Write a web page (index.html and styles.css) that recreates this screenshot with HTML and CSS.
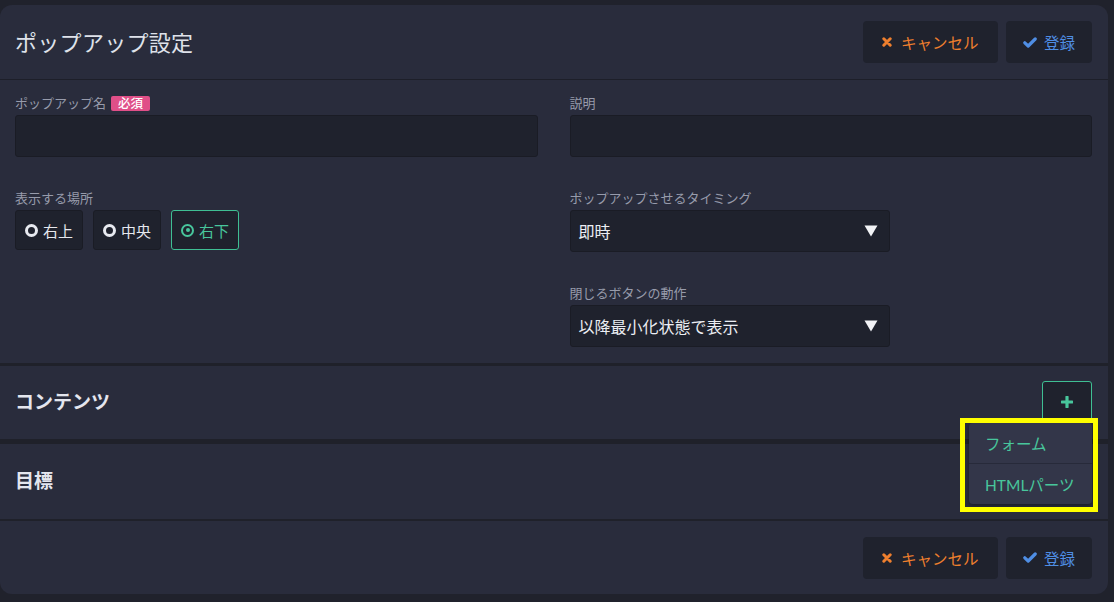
FILE: index.html
```html
<!DOCTYPE html>
<html lang="ja">
<head>
<meta charset="utf-8">
<title>ポップアップ設定</title>
<link rel="stylesheet" href="styles.css">
</head>
<body>
<div class="card">
  <header class="head">
    <h1 class="title">ポップアップ設定</h1>
    <div class="actions">
      <button class="btn btn-cancel"><svg class="ico" viewBox="0 0 10 10" width="10" height="10"><path d="M1.8 1.8 L8.2 8.2 M8.2 1.8 L1.8 8.2" stroke="currentColor" stroke-width="3" stroke-linecap="round"/></svg>キャンセル</button>
      <button class="btn btn-save"><svg class="ico" viewBox="0 0 14 11" width="14" height="11"><path d="M1.8 5.8 L5.2 9 L12.2 2" fill="none" stroke="currentColor" stroke-width="3.2" stroke-linecap="round" stroke-linejoin="round"/></svg>登録</button>
    </div>
  </header>

  <section class="form">
    <div class="field">
      <div class="label">ポップアップ名<span class="badge">必須</span></div>
      <div class="input"></div>
    </div>
    <div class="field">
      <div class="label">説明</div>
      <div class="input"></div>
    </div>
    <div class="field">
      <div class="label">表示する場所</div>
      <div class="radios">
        <div class="radio"><span class="dot"></span>右上</div>
        <div class="radio"><span class="dot"></span>中央</div>
        <div class="radio on"><span class="dot"></span>右下</div>
      </div>
    </div>
    <div class="field">
      <div class="label">ポップアップさせるタイミング</div>
      <div class="select"><span>即時</span><svg class="caret" viewBox="0 0 14 12" width="14" height="12"><path d="M0.5 0.5 H13.5 L7 11.5 Z" fill="#f2f3f6"/></svg></div>
    </div>
    <div class="field empty"></div>
    <div class="field">
      <div class="label">閉じるボタンの動作</div>
      <div class="select"><span>以降最小化状態で表示</span><svg class="caret" viewBox="0 0 14 12" width="14" height="12"><path d="M0.5 0.5 H13.5 L7 11.5 Z" fill="#f2f3f6"/></svg></div>
    </div>
  </section>

  <section class="panel panel-content">
    <h2 class="ptitle">コンテンツ</h2>
    <div class="add-wrap">
      <button class="add"><svg viewBox="0 0 12 12" width="12" height="12"><path d="M6 1 V11 M1 6 H11" stroke="currentColor" stroke-width="3.2" stroke-linecap="round"/></svg></button>
      <div class="menu">
        <div class="item">フォーム</div>
        <div class="item">HTMLパーツ</div>
      </div>
      <div class="highlight"></div>
    </div>
  </section>

  <section class="panel panel-goal">
    <h2 class="ptitle">目標</h2>
  </section>

  <footer class="foot">
    <div class="actions">
      <button class="btn btn-cancel"><svg class="ico" viewBox="0 0 10 10" width="10" height="10"><path d="M1.8 1.8 L8.2 8.2 M8.2 1.8 L1.8 8.2" stroke="currentColor" stroke-width="3" stroke-linecap="round"/></svg>キャンセル</button>
      <button class="btn btn-save"><svg class="ico" viewBox="0 0 14 11" width="14" height="11"><path d="M1.8 5.8 L5.2 9 L12.2 2" fill="none" stroke="currentColor" stroke-width="3.2" stroke-linecap="round" stroke-linejoin="round"/></svg>登録</button>
    </div>
  </footer>
</div>
</body>
</html>
```

FILE: styles.css
```css
* { box-sizing: border-box; }
html, body { margin: 0; }
body {
  background: #20222c;
  padding: 5px 6px 0 0;
  font-family: "Lato", "Noto Sans CJK JP", sans-serif;
  color: #e2e4ec;
}
.card {
  width: 1108px;
  height: 589px;
  background: #292c3c;
  border-radius: 12px;
  display: flex;
  flex-direction: column;
}
.head {
  height: 75px;
  padding: 0 16px 3px 15px;
  display: flex;
  align-items: center;
  justify-content: space-between;
  border-bottom: 1px solid #1d1f29;
}
.head .actions { margin-top: 3px; }
.title {
  margin: 0;
  font-size: 22px;
  font-weight: 400;
  color: #dfe2ea;
  letter-spacing: 0.3px;
}
.actions { display: flex; gap: 8px; }
.btn {
  height: 42px;
  border: none;
  border-radius: 4px;
  background: #1f222d;
  font-family: inherit;
  font-size: 15.5px;
  display: flex;
  align-items: center;
  gap: 9px;
  cursor: pointer;
}
.btn-cancel { width: 135px; padding: 0 0 0 19px; color: #ee7f2e; }
.btn-save { width: 86px; padding: 0 0 0 17px; color: #4f8ee4; gap: 7px; }
.ico { flex: none; }

.form {
  display: grid;
  grid-template-columns: 1fr 1fr;
  column-gap: 32px;
  row-gap: 33px;
  padding: 15px 16px 16px 15px;
  border-bottom: 3px solid #1f212a;
}
.label {
  font-size: 13px;
  line-height: 16px;
  height: 16px;
  color: #979bab;
  margin-bottom: 4px;
  display: flex;
  align-items: center;
}
.badge {
  margin-left: 5px;
  background: #e04f88;
  color: #fff;
  font-size: 12.5px;
  font-weight: 500;
  line-height: 15px;
  padding: 0 7px;
  border-radius: 2px;
}
.input {
  height: 42px;
  background: #1f222d;
  border: 1px solid #1a1c25;
  border-radius: 3px;
}
.radios { display: flex; gap: 10px; }
.radio {
  height: 40px;
  padding: 0 9px;
  background: #1f222d;
  border: 1px solid #1a1c25;
  border-radius: 3px;
  display: flex;
  align-items: center;
  gap: 5px;
  font-size: 15px;
  color: #e6e8ee;
}
.dot {
  width: 13px;
  height: 13px;
  border-radius: 50%;
  border: 3px solid #e8eaf0;
  display: flex;
  align-items: center;
  justify-content: center;
}
.radio.on { border-color: #3fbf93; color: #48c69c; }
.radio.on .dot { border-color: #48c69c; border-width: 2.5px; }
.radio.on .dot::after {
  content: "";
  width: 4px;
  height: 4px;
  border-radius: 50%;
  background: #48c69c;
}
.select {
  width: 320px;
  height: 42px;
  background: #1f222d;
  border: 1px solid #1a1c25;
  border-radius: 3px;
  display: flex;
  align-items: center;
  justify-content: space-between;
  padding: 0 11px 0 8px;
  font-size: 16px;
  color: #eceef3;
}

.panel {
  display: flex;
  align-items: center;
  justify-content: space-between;
  padding: 0 16px 0 15px;
}
.ptitle {
  margin: 0 0 4px;
  font-size: 19px;
  font-weight: 700;
  color: #e4e6ee;
}
.panel-content { height: 78px; border-bottom: 5px solid #1f212a; }
.panel-goal { height: 77px; border-bottom: 2px solid #1f212a; }
.add-wrap { position: relative; }
.add {
  width: 50px;
  height: 41px;
  margin-top: -2px;
  background: #1f222d;
  border: 1px solid #3fbf93;
  border-radius: 3px;
  color: #48c69c;
  display: flex;
  align-items: center;
  justify-content: center;
  cursor: pointer;
}
.menu {
  position: absolute;
  top: 40px;
  right: 0;
  width: 123px;
  background: #333649;
  border-radius: 4px;
  box-shadow: 0 2px 4px rgba(0,0,0,0.35);
  z-index: 2;
}
.item {
  height: 40px;
  display: flex;
  align-items: center;
  padding-left: 16px;
  font-size: 15.5px;
  color: #48c69c;
}
.item + .item { border-top: 1px solid #272a3a; height: 41px; }
.highlight {
  position: absolute;
  left: -82px;
  top: 35px;
  width: 138px;
  height: 94px;
  border: 5px solid #ffff00;
  z-index: 3;
  pointer-events: none;
}
.foot {
  flex: 1;
  display: flex;
  align-items: center;
  justify-content: flex-end;
  padding: 0 16px 0 15px;
}
```
